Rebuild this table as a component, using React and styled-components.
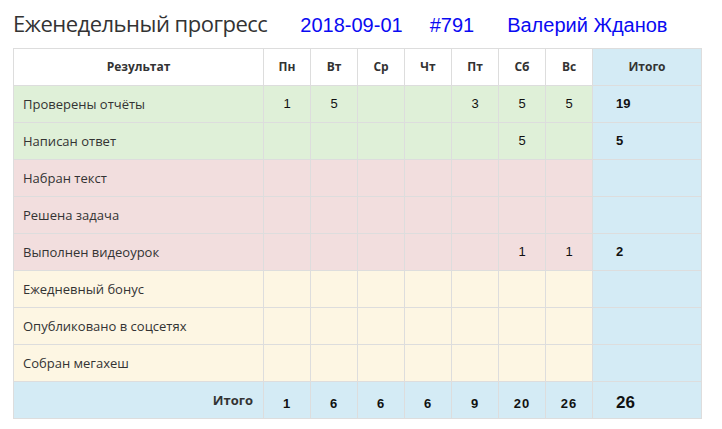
import React from "react";
import styled, { createGlobalStyle } from "styled-components";

const GlobalStyle = createGlobalStyle`
  html, body {
    margin: 0;
    padding: 0;
    background: #fff;
  }
  body {
    font-family: "Open Sans", "DejaVu Sans", sans-serif;
    color: #333;
  }
`;

const rows = [
  { name: "Проверены отчёты", kind: "success", days: [1, 5, "", "", 3, 5, 5], total: 19 },
  { name: "Написан ответ", kind: "success", days: ["", "", "", "", "", 5, ""], total: 5 },
  { name: "Набран текст", kind: "danger", days: ["", "", "", "", "", "", ""], total: "" },
  { name: "Решена задача", kind: "danger", days: ["", "", "", "", "", "", ""], total: "" },
  { name: "Выполнен видеоурок", kind: "danger", days: ["", "", "", "", "", 1, 1], total: 2 },
  { name: "Ежедневный бонус", kind: "warning", days: ["", "", "", "", "", "", ""], total: "" },
  { name: "Опубликовано в соцсетях", kind: "warning", days: ["", "", "", "", "", "", ""], total: "" },
  { name: "Собран мегахеш", kind: "warning", days: ["", "", "", "", "", "", ""], total: "" },
];

const dayNames = ["Пн", "Вт", "Ср", "Чт", "Пт", "Сб", "Вс"];
const dayTotals = [1, 6, 6, 6, 9, 20, 26];

const colors = {
  success: "#dff0d8",
  danger: "#f2dede",
  warning: "#fdf6e3",
  info: "#d4ebf5",
  none: "#fff",
};

const App = () => {
  return (
    <Page>
      <GlobalStyle />
      <Header>
        <Title>Еженедельный прогресс</Title>
        <Info gap={33}>2018-09-01</Info>
        <Info gap={27}>#791</Info>
        <Info gap={33}>Валерий Жданов</Info>
      </Header>
      <Table>
        <colgroup>
          <col style={{ width: 250 }} />
          {dayNames.map((d) => (
            <col key={d} style={{ width: 47 }} />
          ))}
          <col />
        </colgroup>
        <thead>
          <tr>
            <HeadCell>Результат</HeadCell>
            {dayNames.map((d) => (
              <HeadCell key={d}>{d}</HeadCell>
            ))}
            <HeadCell kind="info">Итого</HeadCell>
          </tr>
        </thead>
        <tbody>
          {rows.map((r) => (
            <tr key={r.name}>
              <NameCell kind={r.kind}>{r.name}</NameCell>
              {r.days.map((v, i) => (
                <NumCell key={i} kind={r.kind}>
                  {v}
                </NumCell>
              ))}
              <TotalCell>{r.total}</TotalCell>
            </tr>
          ))}
          <tr>
            <FootLabel>Итого</FootLabel>
            {dayTotals.map((v, i) => (
              <FootNum key={i}>{v}</FootNum>
            ))}
            <FootTotal>26</FootTotal>
          </tr>
        </tbody>
      </Table>
    </Page>
  );
};

export default App;

const Page = styled.div`
  width: 722px;
  padding: 0 20px 0 13px;
  box-sizing: border-box;
`;

const Header = styled.div`
  display: flex;
  align-items: baseline;
  height: 48px;
  padding-top: 8px;
  box-sizing: border-box;
`;

const Title = styled.h1`
  margin: 0;
  font-size: 22px;
  font-weight: 400;
  letter-spacing: -0.5px;
  line-height: 30px;
  color: #333;
`;

const Info = styled.span`
  margin-left: ${(p) => p.gap}px;
  font-family: "Liberation Sans", Arial, sans-serif;
  font-size: 20px;
  color: #0a0af2;
`;

const Table = styled.table`
  width: 689px;
  border-collapse: collapse;
  table-layout: fixed;
  font-size: 13px;
  line-height: 20px;

  td, th {
    border: 1px solid #ddd;
    padding: 8px;
    height: 20px;
  }
`;

const HeadCell = styled.th`
  background: ${(p) => colors[p.kind || "none"]};
  font-size: 12px;
  font-weight: 700;
  text-align: center;
  color: #333;
`;

const NameCell = styled.td`
  background: ${(p) => colors[p.kind]};
  text-align: left;
  padding-left: 9px !important;
`;

const NumCell = styled.td`
  background: ${(p) => colors[p.kind]};
  text-align: center;
  font-family: "Liberation Sans", Arial, sans-serif;
  color: #111;
`;

const TotalCell = styled.td`
  background: ${colors.info};
  padding-left: 23px !important;
  font-family: "Liberation Sans", Arial, sans-serif;
  font-weight: 700;
  color: #111;
`;

const FootLabel = styled.td`
  background: ${colors.info};
  text-align: right;
  font-weight: 700;
  padding-right: 10px !important;
  vertical-align: top;
  padding-top: 8px;
`;

const FootNum = styled.td`
  background: ${colors.info};
  text-align: center;
  font-family: "Liberation Sans", Arial, sans-serif;
  font-weight: 700;
  letter-spacing: 1px;
  color: #111;
  vertical-align: bottom;
  padding-bottom: 4px !important;
`;

const FootTotal = styled.td`
  background: ${colors.info};
  padding-left: 23px !important;
  font-family: "Liberation Sans", Arial, sans-serif;
  font-weight: 700;
  font-size: 17px;
  color: #111;
  vertical-align: bottom;
  padding-bottom: 5px !important;
`;
